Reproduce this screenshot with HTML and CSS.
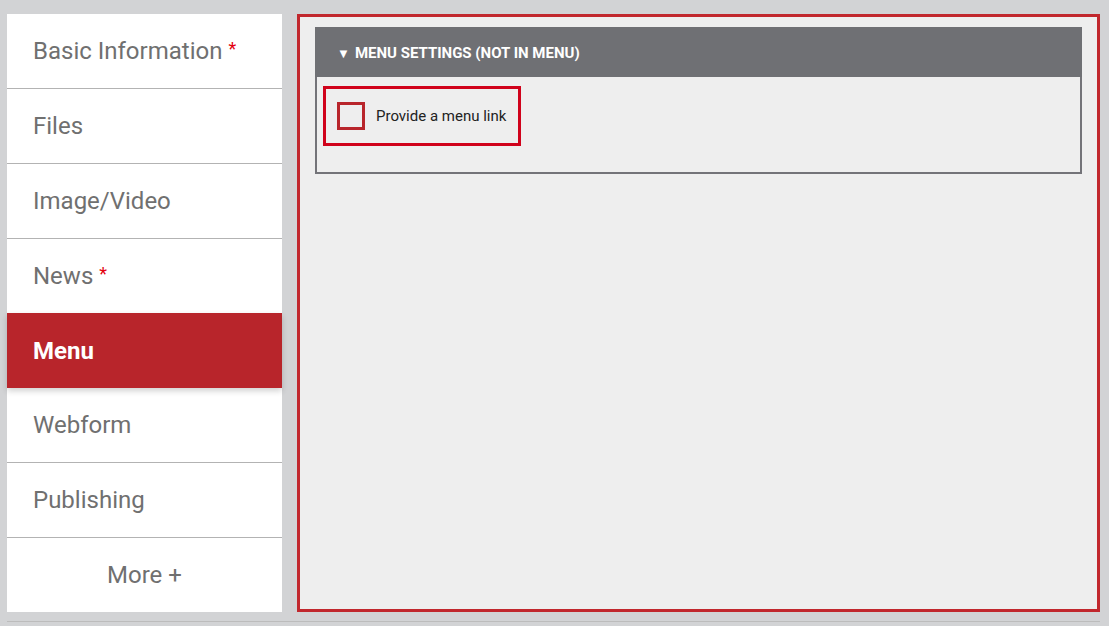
FILE: index.html
```html
<!DOCTYPE html>
<html lang="en">
<head>
<meta charset="utf-8">
<title>Menu settings</title>
<link rel="stylesheet" href="styles.css">
</head>
<body>
<div class="page">
  <div class="layout">
    <nav class="sidenav">
      <a class="nav-item">Basic Information <span class="req">*</span></a>
      <a class="nav-item">Files</a>
      <a class="nav-item">Image/Video</a>
      <a class="nav-item">News <span class="req">*</span></a>
      <a class="nav-item active">Menu</a>
      <a class="nav-item">Webform</a>
      <a class="nav-item">Publishing</a>
      <a class="nav-item more">More +</a>
    </nav>
    <main class="panel">
      <section class="fieldset">
        <div class="fs-head"><span class="tri">&#9660;</span>Menu settings (Not in menu)</div>
        <div class="fs-body">
          <label class="check-wrap">
            <span class="checkbox"></span>
            <span class="check-label">Provide a menu link</span>
          </label>
        </div>
      </section>
    </main>
  </div>
  <div class="footer-line"></div>
</div>
</body>
</html>
```

FILE: styles.css
```css
html, body {
  margin: 0;
  padding: 0;
  background: #d2d3d5;
  font-family: Roboto, "Liberation Sans", Arial, sans-serif;
}
.page {
  width: 1109px;
  height: 626px;
  padding: 14px 9px 0 7px;
  box-sizing: border-box;
}
.layout {
  display: flex;
  gap: 15px;
  height: 598px;
}
.sidenav {
  width: 275px;
  flex: none;
  background: #fff;
  display: flex;
  flex-direction: column;
}
.nav-item {
  display: flex;
  align-items: center;
  height: 74px;
  padding-left: 26px;
  border-bottom: 1px solid #b3b3b3;
  font-size: 24px;
  color: #707070;
  white-space: pre;
  position: relative;
}
.nav-item .req {
  color: #e3000f;
  font-size: 18px;
  position: relative;
  top: -3px;
}
.nav-item.active {
  background: #b8252b;
  color: #fff;
  font-weight: 700;
  height: 75px;
  margin-top: -1px;
  border-bottom: none;
  box-shadow: 0 3px 6px rgba(0,0,0,0.18);
  z-index: 1;
}
.nav-item.more {
  border-bottom: none;
  justify-content: center;
  padding-left: 0;
  flex: 1;
}
.panel {
  flex: 1;
  border: 3px solid #c1272d;
  background: #eeeeee;
  padding: 10px 15px 0 15px;
}
.fieldset {
  display: flex;
  flex-direction: column;
}
.fs-head {
  height: 50px;
  background: #6f7074;
  color: #fff;
  font-weight: 700;
  font-size: 15px;
  text-transform: uppercase;
  display: flex;
  align-items: center;
  padding-left: 22px;
  padding-top: 2px;
  box-sizing: border-box;
}
.tri {
  font-size: 13px;
  margin-right: 5px;
}
.fs-body {
  border: 2px solid #737378;
  border-top: none;
  padding: 9px 6px 26px 6px;
  display: flex;
}
.check-wrap {
  display: flex;
  align-items: center;
  gap: 11px;
  height: 54px;
  border: 3px solid #d0021b;
  padding: 0 12px 0 11px;
}
.checkbox {
  width: 22px;
  height: 22px;
  border: 3px solid #b8252b;
  background: #eeeeee;
}
.check-label {
  font-size: 15px;
  color: #222;
}
.footer-line {
  margin-top: 9px;
  height: 1px;
  width: 1093px;
  background: #bcbcbc;
}
```
